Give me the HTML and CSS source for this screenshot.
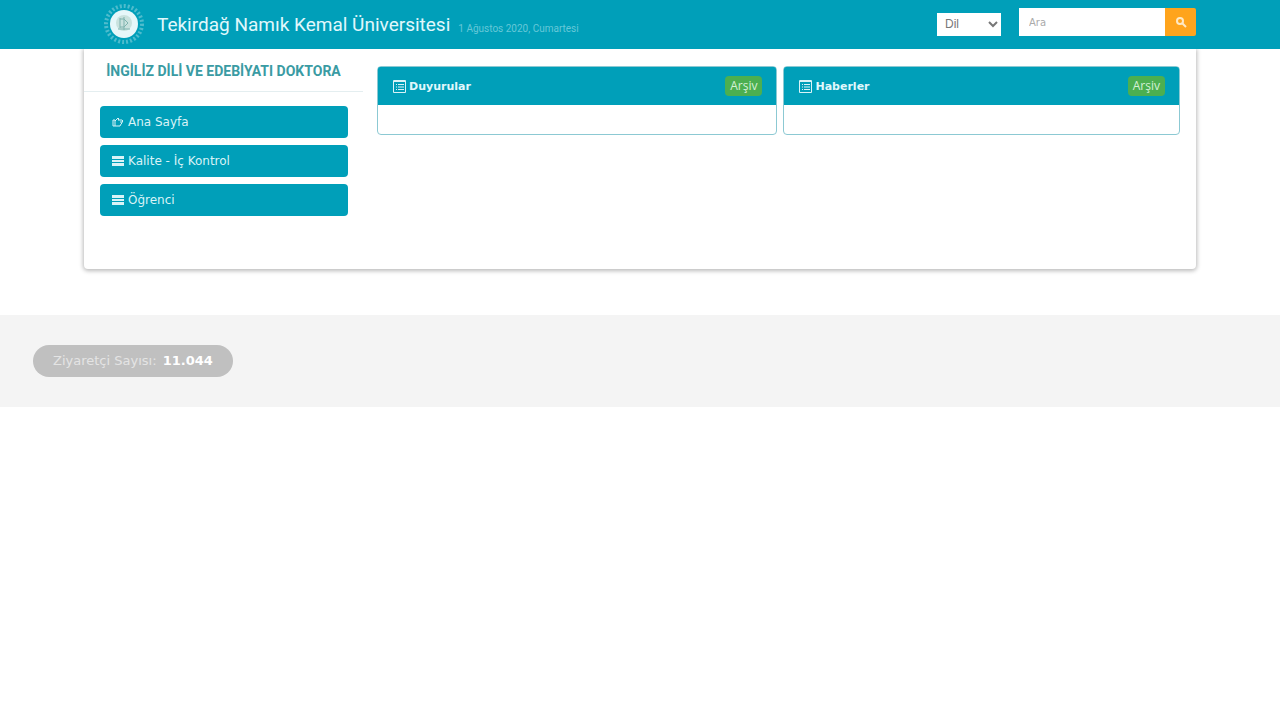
FILE: index.html
```html
<!DOCTYPE html>
<html lang="tr">
<head>
    <meta charset="UTF-8">
    <meta name="viewport" content="width=device-width, initial-scale=1.0">
    <title>Tekirdağ Namık Kemal Üniversitesi</title>
    <link rel="stylesheet" href="styles.css">
</head>
<body>
    <header class="topbar">
        <div class="container topbar-inner">
            <a href="#" class="logo" aria-label="Ana Sayfa">
                <svg width="42" height="42" viewBox="0 0 42 42">
                    <circle cx="21" cy="21" r="18" fill="none" stroke="#4fbccd" stroke-width="4" stroke-dasharray="2 2"/>
                    <circle cx="21" cy="21" r="14" fill="#e6f7f9"/>
                    <circle cx="21" cy="20" r="8" fill="#c9e2de"/>
                    <path d="M17 15v10M17 16h4l4 4-4 4h-4M21 14v13M15 26h12" fill="none" stroke="#7fb3ae" stroke-width="1"/>
                </svg>
            </a>
            <a href="#" class="site-name">Tekirdağ Namık Kemal Üniversitesi</a>
            <span class="date">1 Ağustos 2020, Cumartesi</span>
            <form class="tools" action="#">
                <select class="lang" aria-label="Dil">
                    <option>Dil</option>
                </select>
                <div class="search">
                    <input type="text" placeholder="Ara" aria-label="Ara">
                    <button type="submit" aria-label="Ara">
                        <svg width="12" height="12" viewBox="0 0 12 12" fill="none" stroke="#ffe9c4" stroke-width="2">
                            <circle cx="5" cy="5" r="3"/>
                            <path d="M7 7l4 4"/>
                        </svg>
                    </button>
                </div>
            </form>
        </div>
    </header>

    <div class="container page">
        <aside class="sidebar">
            <h1>İNGİLİZ DİLİ VE EDEBİYATI DOKTORA</h1>
            <nav class="menu">
                <a href="#">
                    <svg width="12" height="12" viewBox="0 0 12 12" fill="none" stroke="#d9f3f7"><path d="M1 4h2v6H1zM3 5l3-3 1 1-1 1h4l1 1-1 1H8M10 6v1l-1 1-1 2H3"/></svg>
                    Ana Sayfa
                </a>
                <a href="#">
                    <svg width="12" height="12" viewBox="0 0 12 12" fill="#d9f3f7"><path d="M0 1h12v3H0zM0 5h12v2H0zM0 8h12v3H0z"/></svg>
                    Kalite - İç Kontrol
                </a>
                <a href="#">
                    <svg width="12" height="12" viewBox="0 0 12 12" fill="#d9f3f7"><path d="M0 1h12v3H0zM0 5h12v2H0zM0 8h12v3H0z"/></svg>
                    Öğrenci
                </a>
            </nav>
        </aside>
        <main class="panels">
            <section class="panel">
                <div class="panel-head">
                    <svg width="13" height="13" viewBox="0 0 13 13" fill="none" stroke="#d9f3f7"><path d="M.5.5h12v12H.5zM1 1.500h11M3 4.500h1M3 7h1M3 9.500h1M5 4.500h6M5 7h6M5 9.500h6"/></svg>
                    <h2>Duyurular</h2>
                    <a href="#" class="archive">Arşiv</a>
                </div>
                <div class="panel-body"></div>
            </section>
            <section class="panel">
                <div class="panel-head">
                    <svg width="13" height="13" viewBox="0 0 13 13" fill="none" stroke="#d9f3f7"><path d="M.5.5h12v12H.5zM1 1.500h11M3 4.500h1M3 7h1M3 9.500h1M5 4.500h6M5 7h6M5 9.500h6"/></svg>
                    <h2>Haberler</h2>
                    <a href="#" class="archive">Arşiv</a>
                </div>
                <div class="panel-body"></div>
            </section>
        </main>
    </div>

    <footer class="footer">
        <div class="counter">Ziyaretçi Sayısı: <strong>11.044</strong></div>
    </footer>
</body>
</html>
```

FILE: styles.css
```css
* {
    box-sizing: border-box;
}
body {
    margin: 0;
    font-family: "DejaVu Sans", Verdana, sans-serif;
    font-size: 12px;
    background-color: #fff;
}
a {
    text-decoration: none;
}
.container {
    width: calc(100% - 168px);
    max-width: 1112px;
    margin: 0 auto;
}

/* header */
.topbar {
    background-color: #009fb9;
    height: 49px;
}
.topbar-inner {
    display: flex;
    align-items: center;
    height: 48px;
    padding-left: 19px;
}
.logo {
    display: flex;
}
.site-name {
    margin-left: 12px;
    color: #e0f8fc;
    font-family: Roboto, sans-serif;
    font-size: 19px;
}
.date {
    margin: 8px 0 0 8px;
    color: #66c8d8;
    font-family: Roboto, sans-serif;
    font-size: 10px;
}
.tools {
    display: flex;
    align-items: center;
    gap: 18px;
    margin: 0 0 4px auto;
}
.lang {
    width: 64px;
    height: 23px;
    margin-top: 4px;
    padding-left: 4px;
    border: 0;
    background-color: #fff;
    color: #777;
    font-family: "Liberation Sans", Arial, sans-serif;
    font-size: 12px;
}
.search {
    display: flex;
}
.search input {
    width: 146px;
    height: 28px;
    padding: 0 10px;
    border: 0;
    font-family: inherit;
    font-size: 10px;
}
.search input::placeholder {
    color: #aaa;
}
.search button {
    display: flex;
    align-items: center;
    justify-content: center;
    width: 31px;
    height: 28px;
    padding: 0;
    border: 0;
    border-radius: 0 2px 2px 0;
    background-color: #ffa41c;
}

/* page */
.page {
    display: flex;
    gap: 14px;
    min-height: 220px;
    padding-right: 16px;
    border-radius: 0 0 4px 4px;
    box-shadow: 0 1px 4px 1px #bbb;
    clip-path: inset(0 -8px -8px -8px);
}
.sidebar {
    width: 279px;
}
.sidebar h1 {
    margin: 0;
    padding: 15px 0 13px;
    border-bottom: 1px solid #e4eef0;
    color: #3a9ba3;
    font-family: Roboto, sans-serif;
    font-size: 14px;
    font-weight: 700;
    line-height: 14px;
    text-align: center;
}
.menu {
    display: flex;
    flex-direction: column;
    gap: 7px;
    padding: 14px 15px 14px 16px;
}
.menu a {
    display: flex;
    align-items: center;
    gap: 4px;
    height: 32px;
    padding: 0 12px;
    border-radius: 4px;
    background-color: #009fb9;
    color: #d9f3f7;
}
.panels {
    flex: 1;
    display: flex;
    align-items: flex-start;
    gap: 6px;
    padding-top: 17px;
}
.panel {
    flex: 100;
    border: 1px solid #8cc9d3;
    border-radius: 4px;
}
.panel:first-child {
    flex: 101;
}
.panel-head {
    display: flex;
    align-items: center;
    gap: 3px;
    height: 38px;
    padding: 0 14px 0 15px;
    border-radius: 2px 2px 0 0;
    background-color: #009fb9;
}
.panel-head h2 {
    margin: 0;
    color: #e0f8fc;
    font-size: 11px;
}
.archive {
    margin-left: auto;
    padding: 0 5px;
    border-radius: 4px;
    background-color: #4caf50;
    color: #d5efd6;
    font-family: "Open Sans", sans-serif;
    font-size: 12px;
    line-height: 20px;
}
.panel-body {
    height: 29px;
}

/* footer */
.footer {
    margin-top: 46px;
    padding: 30px 33px;
    background-color: #f4f4f4;
}
.counter {
    width: fit-content;
    padding: 0 20px;
    border-radius: 16px;
    background-color: #c0c0c0;
    color: #e4e4e4;
    font-size: 13px;
    line-height: 32px;
}
.counter strong {
    margin-left: 2px;
    color: #fff;
}
```
